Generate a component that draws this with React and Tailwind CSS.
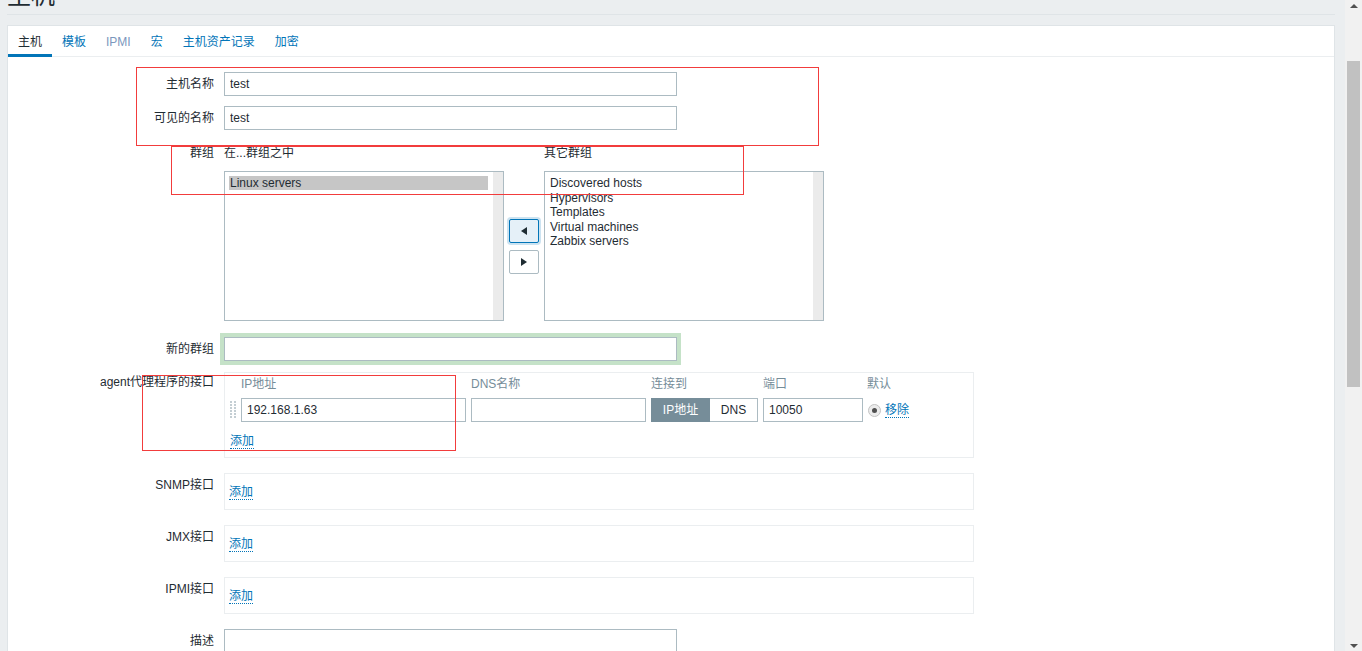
import React from 'react'

const Label = ({ children, pt = 'pt-[5px]' }) => (
  <div className={`w-[206px] shrink-0 text-right leading-[14px] text-[#1f2c33] ${pt}`}>{children}</div>
)

const TextBox = ({ value = '', width = 'w-[453px]' }) => (
  <input
    readOnly
    value={value}
    className={`${width} h-[24px] border border-[#acbbc2] bg-white px-[5px] text-[12px] text-[#1f2c33] outline-none`}
  />
)

const AddLink = () => (
  <span className="leading-[14px] text-[#0275b8] border-b border-dotted border-[#0275b8]">添加</span>
)

const Triangle = ({ dir }) => (
  <svg width="6" height="8" viewBox="0 0 6 8">
    {dir === 'left' ? <path d="M6 0 L0 4 L6 8 Z" fill="#1f2c33" /> : <path d="M0 0 L6 4 L0 8 Z" fill="#1f2c33" />}
  </svg>
)

const ListBox = ({ items, selected }) => (
  <div className="flex w-[280px] h-[150px] border border-[#acbbc2] bg-white">
    <div className="flex-1 pt-[4px] pl-[4px] pr-[5px] text-[#1f2c33]">
      {items.map((item) => (
        <div
          key={item}
          className={item === selected ? 'bg-[#c6c6c6] pl-[1px] leading-[14px]' : 'pl-[1px] leading-[14.5px]'}
        >
          {item}
        </div>
      ))}
    </div>
    <div className="w-[10px] bg-[#ebebeb]" />
  </div>
)

const SimpleInterface = ({ label }) => (
  <div className="flex mt-[15px]">
    <Label>{label}</Label>
    <div className="ml-[10px] w-[750px] h-[37px] border border-[#ebeef0] pt-[11px] pl-[4px] leading-[14px]">
      <AddLink />
    </div>
  </div>
)

const tabs = ['主机', '模板', 'IPMI', '宏', '主机资产记录', '加密']

export default function App() {
  return (
    <div className="relative flex h-[651px] w-[1362px] overflow-hidden bg-[#ebeef0] text-[12px] font-['Liberation_Sans','Noto_Sans_CJK_SC',sans-serif]">
      <div className="flex-1 min-w-0 pl-[7px] pr-[10px]">
        {/* page title, mostly scrolled away */}
        <div className="flex h-[15px] items-end border-b border-[#dfe4e7]">
          <div className="mb-[6px] text-[24px] leading-[24px] text-[#1f2c33]">主机</div>
        </div>

        <div className="mt-[10px] h-[700px] border border-[#dfe4e7] bg-white">
          <div className="flex border-b border-[#ebeef0]">
            {tabs.map((tab, i) => (
              <div
                key={tab}
                className={
                  i === 0
                    ? 'px-[10px] pt-[9px] pb-[4px] leading-[14px] border-b-[3px] border-[#0275b8] text-[#1f2c33] -mb-px'
                    : `px-[10px] pt-[9px] pb-[7px] leading-[14px] ${tab === 'IPMI' ? 'text-[#7b97bd]' : 'text-[#0275b8]'}`
                }
              >
                {tab}
              </div>
            ))}
          </div>

          <div className="flex mt-[15px]">
            <Label>主机名称</Label>
            <div className="ml-[10px]">
              <TextBox value="test" />
            </div>
          </div>

          <div className="flex mt-[10px]">
            <Label>可见的名称</Label>
            <div className="ml-[10px]">
              <TextBox value="test" />
            </div>
          </div>

          <div className="flex mt-[16px]">
            <Label pt="pt-0">群组</Label>
            <div className="ml-[10px]">
              <div className="flex leading-[14px] text-[#1f2c33]">
                <div className="w-[320px]">在...群组之中</div>
                <div>其它群组</div>
              </div>
              <div className="flex items-center mt-[11px]">
                <ListBox items={['Linux servers']} selected="Linux servers" />
                <div className="ml-[5px] flex flex-col gap-[7px]">
                  <div className="flex h-[24px] w-[30px] items-center justify-center rounded-[2px] border border-[#0275b8] bg-[#e5f0f8] shadow-[0_0_0_2px_rgba(2,117,184,0.2)]">
                    <Triangle dir="left" />
                  </div>
                  <div className="flex h-[24px] w-[30px] items-center justify-center rounded-[2px] border border-[#acbbc2] bg-white">
                    <Triangle dir="right" />
                  </div>
                </div>
                <div className="ml-[5px]">
                  <ListBox items={['Discovered hosts', 'Hypervisors', 'Templates', 'Virtual machines', 'Zabbix servers']} />
                </div>
              </div>
            </div>
          </div>

          <div className="flex mt-[16px]">
            <Label>新的群组</Label>
            <div className="ml-[10px]">
              <div className="shadow-[0_0_0_4px_#c5e2c8]">
                <TextBox />
              </div>
            </div>
          </div>

          <div className="flex mt-[11px]">
            <Label pt="pt-[3px]">agent代理程序的接口</Label>
            <div className="ml-[10px] w-[750px] border border-[#ebeef0] pl-[4px] pb-[9px]">
              <div className="flex pt-[4px] leading-[14px] text-[#768d99]">
                <div className="w-[12px]" />
                <div className="w-[225px]">IP地址</div>
                <div className="ml-[5px] w-[175px]">DNS名称</div>
                <div className="ml-[5px] w-[107px]">连接到</div>
                <div className="ml-[5px] w-[100px]">端口</div>
                <div className="ml-[4px]">默认</div>
              </div>
              <div className="flex items-center mt-[7px]">
                <div className="w-[12px] pl-[1px]">
                  <svg width="7" height="18" viewBox="0 0 7 18">
                    {[0, 3, 6, 9, 12, 15].map((y) => (
                      <g key={y}>
                        <rect x="0" y={y} width="2" height="2" fill="#c4ced3" />
                        <rect x="4" y={y} width="2" height="2" fill="#c4ced3" />
                      </g>
                    ))}
                  </svg>
                </div>
                <TextBox value="192.168.1.63" width="w-[225px]" />
                <div className="ml-[5px]">
                  <TextBox width="w-[175px]" />
                </div>
                <div className="ml-[5px] flex h-[24px] w-[107px]">
                  <div className="flex w-[59px] items-center justify-center bg-[#768d99] text-white">IP地址</div>
                  <div className="flex flex-1 items-center justify-center border border-l-0 border-[#acbbc2] text-[#1f2c33]">DNS</div>
                </div>
                <div className="ml-[5px]">
                  <TextBox value="10050" width="w-[100px]" />
                </div>
                <div className="ml-[5px] flex h-[13px] w-[13px] items-center justify-center rounded-full border border-[#c3c3c3] bg-[#ececec]">
                  <div className="h-[5px] w-[5px] rounded-full bg-[#4f4f4f]" />
                </div>
                <div className="ml-[4px]">
                  <span className="leading-[14px] text-[#0275b8] border-b border-dotted border-[#0275b8]">移除</span>
                </div>
              </div>
              <div className="mt-[12px] pl-[1px] leading-[14px]">
                <AddLink />
              </div>
            </div>
          </div>

          <SimpleInterface label="SNMP接口" />
          <SimpleInterface label="JMX接口" />
          <SimpleInterface label="IPMI接口" />

          <div className="flex mt-[15px]">
            <Label>描述</Label>
            <div className="ml-[10px] w-[453px] h-[60px] border border-[#acbbc2]" />
          </div>
        </div>
      </div>

      {/* browser scrollbar */}
      <div className="flex w-[17px] flex-col bg-[#f1f1f1]">
        <div className="flex h-[17px] justify-center pt-[4px]">
          <svg width="8" height="4" viewBox="0 0 8 4">
            <path d="M4 0 L8 4 L0 4 Z" fill="#505050" />
          </svg>
        </div>
        <div className="mx-[2px] mt-[44px] h-[326px] bg-[#c1c1c1]" />
        <div className="flex-1" />
        <div className="flex h-[17px] justify-center pt-[10px]">
          <svg width="8" height="4" viewBox="0 0 8 4">
            <path d="M0 0 L8 0 L4 4 Z" fill="#505050" />
          </svg>
        </div>
      </div>

      {/* red annotation frames drawn over the screenshot */}
      <div className="pointer-events-none absolute left-[136px] top-[67px] h-[79px] w-[683px] border border-[#f23c3c]" />
      <div className="pointer-events-none absolute left-[171px] top-[146px] h-[49px] w-[573px] border border-[#f23c3c]" />
      <div className="pointer-events-none absolute left-[142px] top-[375px] h-[76px] w-[314px] border border-[#f23c3c]" />
    </div>
  )
}
